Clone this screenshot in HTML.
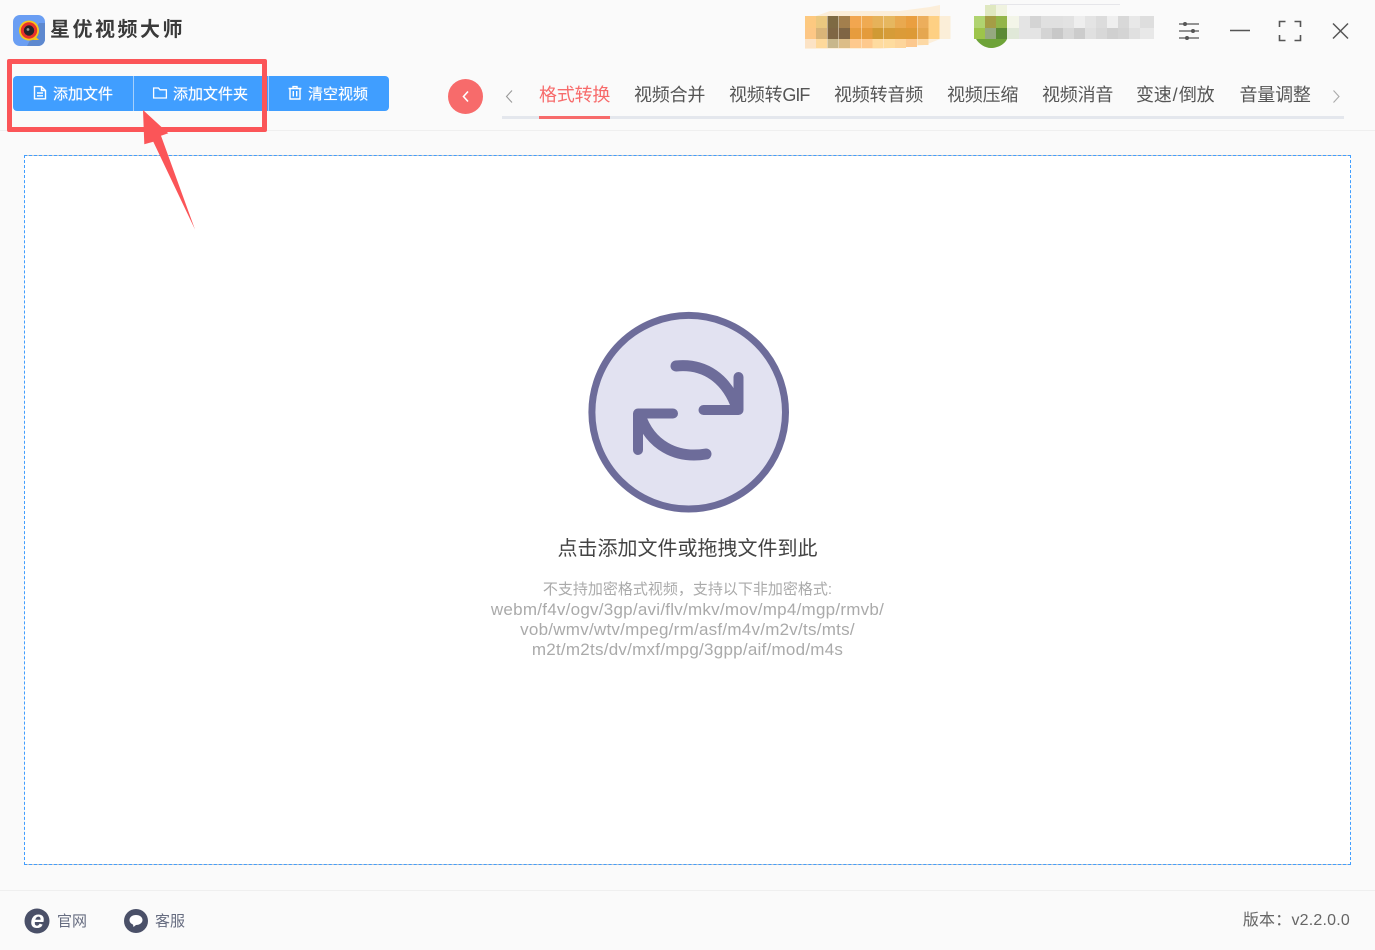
<!DOCTYPE html>
<html lang="zh">
<head>
<meta charset="utf-8">
<title>星优视频大师</title>
<style>
html,body{margin:0;padding:0;}
body{width:1375px;height:950px;position:relative;overflow:hidden;background:#fafafa;font-family:"Liberation Sans","Noto Sans CJK SC",sans-serif;}
.a{position:absolute;white-space:nowrap;}
.tab{position:absolute;top:82px;height:26px;line-height:26px;font-size:18px;color:#555;white-space:nowrap;letter-spacing:-.2px;}
.btxt{position:absolute;top:77px;height:35px;line-height:35px;font-size:15px;color:#fff;white-space:nowrap;text-shadow:0 0 .6px #fff;}
.sub{position:absolute;left:0;width:1375px;text-align:center;height:20px;line-height:20px;font-size:17px;letter-spacing:.25px;color:#aaa;white-space:nowrap;}
</style>
</head>
<body>

<!-- logo -->
<svg class="a" style="left:13px;top:15px" width="32" height="31" viewBox="0 0 32 31">
<rect width="32" height="31" rx="7" fill="#6a9ef3"/>
<path d="M32 8V24a7 7 0 0 1-7 7H14L26 8z" fill="#5d88cf"/>
<circle cx="16" cy="15.5" r="10" fill="#f7c51e"/>
<path d="M23 22l3 3h-6z" fill="#f7c51e"/>
<circle cx="16" cy="15.5" r="8.2" fill="#e8302a"/>
<circle cx="16" cy="15.5" r="5.2" fill="#26242a"/>
<circle cx="15" cy="14.5" r="1.4" fill="#9a9a9a"/>
</svg>
<div class="a" style="left:50px;top:16px;height:28px;line-height:28px;font-size:20px;font-weight:700;color:#3a3a3a;letter-spacing:2.5px;">星优视频大师</div>

<!-- blurred areas -->
<svg class="a" style="left:800px;top:0" width="370" height="55" viewBox="800 0 370 55" shape-rendering="crispEdges">
<path d="M816 16L830 11H900L930 7L940 5V39L925 45L880 49H805V16z" fill="#fee3bd" shape-rendering="auto" opacity=".55"/>
<g>
<rect x="805" y="16" width="11.2" height="12" fill="#fdc980"/><rect x="816" y="16" width="11.2" height="12" fill="#ebc87f"/><rect x="827.5" y="16" width="11.2" height="12" fill="#7e6a43"/><rect x="839" y="16" width="11.2" height="12" fill="#a37f4d"/><rect x="850" y="16" width="11.2" height="12" fill="#f2a64f"/><rect x="861.5" y="16" width="11.2" height="12" fill="#efaa52"/><rect x="872.5" y="16" width="11.2" height="12" fill="#e6b25a"/><rect x="884" y="16" width="11.2" height="12" fill="#e6b75f"/><rect x="895" y="16" width="11.2" height="12" fill="#e9a94f"/><rect x="906" y="16" width="11.2" height="12" fill="#ea9f40"/><rect x="917.5" y="16" width="11.2" height="12" fill="#ecae5c"/><rect x="928.5" y="16" width="11.2" height="12" fill="#fed083"/><rect x="939.5" y="16" width="11.2" height="12" fill="#fbeed8"/>
<rect x="805" y="28" width="11.2" height="11" fill="#fdc785"/><rect x="816" y="28" width="11.2" height="11" fill="#d9b478"/><rect x="827.5" y="28" width="11.2" height="11" fill="#7f6644"/><rect x="839" y="28" width="11.2" height="11" fill="#7f6544"/><rect x="850" y="28" width="11.2" height="11" fill="#e69c3e"/><rect x="861.5" y="28" width="11.2" height="11" fill="#e49b3c"/><rect x="872.5" y="28" width="11.2" height="11" fill="#d09a34"/><rect x="884" y="28" width="11.2" height="11" fill="#d69c38"/><rect x="895" y="28" width="11.2" height="11" fill="#db9b38"/><rect x="906" y="28" width="11.2" height="11" fill="#dd9a36"/><rect x="917.5" y="28" width="11.2" height="11" fill="#e5a750"/><rect x="928.5" y="28" width="11.2" height="11" fill="#fed083"/><rect x="939.5" y="28" width="11.2" height="11" fill="#fbeed8"/>
<rect x="805" y="39" width="11.2" height="9" fill="#fce3c5"/><rect x="816" y="39" width="11.2" height="9" fill="#fed99b"/><rect x="827.5" y="39" width="11.2" height="9" fill="#c8b78c"/><rect x="839" y="39" width="11.2" height="9" fill="#dcbd88"/><rect x="850" y="39" width="11.2" height="9" fill="#fec98d"/><rect x="861.5" y="39" width="11.2" height="9" fill="#fec98d"/><rect x="872.5" y="39" width="11.2" height="9" fill="#fedb9f"/><rect x="884" y="39" width="11.2" height="9" fill="#fedc9f"/><rect x="895" y="39" width="11.2" height="9" fill="#fdd59b"/><rect x="906" y="39" width="11.2" height="8" fill="#fcc88e"/><rect x="917.5" y="39" width="11.2" height="6" fill="#fdd9a5"/>
</g>
<path d="M990 4.5H1120" stroke="#e6e6ea" stroke-width="1" fill="none"/>
<g>
<rect x="985" y="5" width="11" height="11" fill="#dfe8c0"/><rect x="996" y="5" width="11" height="11" fill="#f0f3e0"/>
<rect x="974" y="16" width="11" height="12" fill="#b0d370"/><rect x="985" y="16" width="11" height="12" fill="#a59d45"/><rect x="996" y="16" width="11" height="12" fill="#93b54a"/><rect x="1007" y="16" width="12" height="12" fill="#f3f5e8"/><rect x="1019" y="16" width="11" height="12" fill="#e4e4e4"/><rect x="1030" y="16" width="11" height="12" fill="#d4d4d4"/><rect x="1041" y="16" width="11" height="12" fill="#e0e0e0"/><rect x="1052" y="16" width="11" height="12" fill="#e0e0e0"/><rect x="1063" y="16" width="11" height="12" fill="#e2e2e2"/><rect x="1074" y="16" width="11" height="12" fill="#eeeeee"/><rect x="1085" y="16" width="11" height="12" fill="#e4e4e4"/><rect x="1096" y="16" width="11" height="12" fill="#dcdcdc"/><rect x="1107" y="16" width="11" height="12" fill="#efefef"/><rect x="1118" y="16" width="11" height="12" fill="#d8d8d8"/><rect x="1129" y="16" width="11" height="12" fill="#e8e8e8"/><rect x="1140" y="16" width="14" height="12" fill="#dedede"/>
<rect x="974" y="28" width="11" height="11" fill="#9dc44a"/><rect x="985" y="28" width="11" height="11" fill="#95a880"/><rect x="996" y="28" width="11" height="11" fill="#5b8a35"/><rect x="1007" y="28" width="12" height="11" fill="#e0e8d8"/><rect x="1019" y="28" width="11" height="11" fill="#e4e4e4"/><rect x="1030" y="28" width="11" height="11" fill="#e4e4e4"/><rect x="1041" y="28" width="11" height="11" fill="#d4d4d4"/><rect x="1052" y="28" width="11" height="11" fill="#c8c8c8"/><rect x="1063" y="28" width="11" height="11" fill="#d8d8d8"/><rect x="1074" y="28" width="11" height="11" fill="#cccccc"/><rect x="1085" y="28" width="11" height="11" fill="#e0e0e0"/><rect x="1096" y="28" width="11" height="11" fill="#d8d8d8"/><rect x="1107" y="28" width="11" height="11" fill="#d0d0d0"/><rect x="1118" y="28" width="11" height="11" fill="#d4d4d4"/><rect x="1129" y="28" width="11" height="11" fill="#e0e0e0"/><rect x="1140" y="28" width="14" height="11" fill="#e8e8e8"/>
</g>
<path d="M976 39H1007C1005 44 998 48 991 48C985 48 979 44 976 39z" fill="#6ea338" shape-rendering="auto"/>
</svg>

<!-- window controls -->
<svg class="a" style="left:1170px;top:10px" width="190" height="40" viewBox="1170 10 190 40" fill="none" stroke="#555" stroke-width="1.4">
<path d="M1179 24H1199M1179 31H1199M1179 38H1199" stroke-width="1.3"/>
<circle cx="1185" cy="24" r="2" fill="#555" stroke="none"/><circle cx="1193" cy="31" r="2" fill="#555" stroke="none"/><circle cx="1187" cy="38" r="2" fill="#555" stroke="none"/>
<path d="M1230 30.5H1250"/>
<path d="M1279.5 27V21.5H1285.5M1294.5 21.5H1300.5V27M1300.5 35V40.5H1294.5M1285.5 40.5H1279.5V35" stroke-width="1.6"/>
<path d="M1333 23.5L1348 38.5M1348 23.5L1333 38.5" stroke-width="1.5"/>
</svg>

<!-- header divider -->
<div class="a" style="left:0;top:130px;width:1375px;height:1px;background:#efefef;"></div>

<!-- toolbar buttons -->
<div class="a" style="left:13px;top:76px;width:376px;height:35px;background:#409eff;border-radius:4px;"></div>
<div class="a" style="left:133px;top:76px;width:1px;height:35px;background:#a6d0fb;"></div>
<div class="a" style="left:268px;top:76px;width:1px;height:35px;background:#a6d0fb;"></div>
<svg class="a" style="left:30px;top:83px" width="20" height="20" viewBox="0 0 20 20" fill="none" stroke="#fff" stroke-width="1.4">
<path d="M4.5 3.6H11.5L15.5 7.5V15.8H4.5zM11.5 3.6V7.5H15.5M7 10H13M7 12.8H13"/>
</svg>
<div class="btxt" style="left:53px;">添加文件</div>
<svg class="a" style="left:150px;top:83px" width="20" height="20" viewBox="0 0 20 20" fill="none" stroke="#fff" stroke-width="1.3">
<path d="M3.6 5H8.5L10 6.8H16.4V15H3.6z"/>
</svg>
<div class="btxt" style="left:173px;">添加文件夹</div>
<svg class="a" style="left:285px;top:83px" width="20" height="20" viewBox="0 0 20 20" fill="none" stroke="#fff" stroke-width="1.4">
<path d="M3.6 5.5H16.4M8 5.5V3.6H12V5.5M5 5.5V16H15V5.5M8.3 8V13.5M11.7 8V13.5"/>
</svg>
<div class="btxt" style="left:308px;">清空视频</div>

<!-- red back circle -->
<svg class="a" style="left:448px;top:79px" width="35" height="35" viewBox="0 0 35 35">
<circle cx="17.5" cy="17.5" r="17.5" fill="#f76b6b"/>
<path d="M20 12.5L15.5 17.5L20 22.5" fill="none" stroke="#fff" stroke-width="1.6"/>
</svg>
<svg class="a" style="left:500px;top:86px" width="18" height="20" viewBox="0 0 18 20">
<path d="M12 4.5L6.5 10.5L12 16.5" fill="none" stroke="#999" stroke-width="1.1"/>
</svg>
<svg class="a" style="left:1327px;top:86px" width="18" height="20" viewBox="0 0 18 20">
<path d="M6.5 4.5L12 10.5L6.5 16.5" fill="none" stroke="#aaa" stroke-width="1.1"/>
</svg>

<!-- tabs -->
<div class="tab" style="left:539px;color:#f76b6b;">格式转换</div>
<div class="tab" style="left:634px;">视频合并</div>
<div class="tab" style="left:729px;">视频转<span style="letter-spacing:-1px">GIF</span></div>
<div class="tab" style="left:834px;">视频转音频</div>
<div class="tab" style="left:947px;">视频压缩</div>
<div class="tab" style="left:1042px;">视频消音</div>
<div class="tab" style="left:1136px;">变速<span style="letter-spacing:1.2px;margin-left:1px">/</span>倒放</div>
<div class="tab" style="left:1239.5px;">音量调整</div>
<div class="a" style="left:502px;top:116px;width:842px;height:3px;background:#e4e7ed;"></div>
<div class="a" style="left:539px;top:116px;width:71px;height:3px;background:#f76b6b;"></div>

<!-- drop zone -->
<div class="a" style="left:24px;top:155px;width:1327px;height:1px;background:#c4c4c4;"></div>
<div class="a" style="left:24px;top:864px;width:1327px;height:1px;background:#c4c4c4;"></div>
<div class="a" style="left:24px;top:155px;width:1325px;height:708px;background:#fff;background-clip:padding-box;border:1px dashed #409eff;"></div>

<!-- central icon -->
<svg class="a" style="left:580px;top:305px" width="220" height="215" viewBox="580 305 220 215" fill="none">
<circle cx="688.7" cy="412.2" r="96.8" fill="#e2e2f1" stroke="#6d6c9a" stroke-width="7"/>
<g stroke="#6d6c9a" stroke-linecap="round" stroke-linejoin="round">
<path d="M676 366C705 363 727 379 737 408" stroke-width="11"/>
<path d="M738.5 377V410H703.5" stroke-width="10"/>
<path d="M638 450V413.5H673" stroke-width="10"/>
<path d="M640 415C650 445 676 459 706 454" stroke-width="11"/>
</g>
</svg>

<!-- central text -->
<div class="a" style="left:0;top:535px;width:1375px;text-align:center;font-size:20px;line-height:28px;color:#444;">点击添加文件或拖拽文件到此</div>
<div class="a" style="left:0;top:580px;width:1375px;text-align:center;font-size:15px;line-height:20px;color:#aaa;">不支持加密格式视频，支持以下非加密格式:</div>
<div class="sub" style="top:600px;">webm/f4v/ogv/3gp/avi/flv/mkv/mov/mp4/mgp/rmvb/</div>
<div class="sub" style="top:620px;">vob/wmv/wtv/mpeg/rm/asf/m4v/m2v/ts/mts/</div>
<div class="sub" style="top:640px;">m2t/m2ts/dv/mxf/mpg/3gpp/aif/mod/m4s</div>

<!-- red annotation -->
<div class="a" style="left:7px;top:59px;width:250px;height:63px;border:5px solid #fb5558;border-radius:2px;"></div>
<svg class="a" style="left:135px;top:105px" width="70" height="130" viewBox="135 105 70 130">
<path d="M143 110L168.3 133.3L161 135.7L195 229.5L153.3 141.7L144.3 144.3z" fill="#fb5558"/>
</svg>

<!-- footer -->
<div class="a" style="left:0;top:890px;width:1375px;height:1px;background:#efefef;"></div>
<svg class="a" style="left:24px;top:908px" width="26" height="26" viewBox="0 0 26 26">
<circle cx="13" cy="13" r="12.5" fill="#4a5068"/>
<text x="13.5" y="20" text-anchor="middle" font-family="Liberation Sans, sans-serif" font-size="25" font-weight="700" font-style="italic" fill="#fff">e</text>
</svg>
<div class="a" style="left:57px;top:911px;font-size:15px;line-height:22px;color:#666c80;">官网</div>
<svg class="a" style="left:124px;top:909px" width="24" height="24" viewBox="0 0 24 24">
<circle cx="12" cy="12" r="12" fill="#4a5068"/>
<path d="M12 6C8 6 5.5 8.3 5.5 11C5.5 13.2 7 14.8 9 15.5L9.5 18L12 16C15.8 16 18.5 13.8 18.5 11C18.5 8.3 16 6 12 6z" fill="#fff"/>
</svg>
<div class="a" style="left:155px;top:911px;font-size:15px;line-height:22px;color:#666c80;">客服</div>
<div class="a" style="right:25px;top:910px;font-size:16px;line-height:22px;color:#666;letter-spacing:.2px;">版本：v2.2.0.0</div>

</body>
</html>
